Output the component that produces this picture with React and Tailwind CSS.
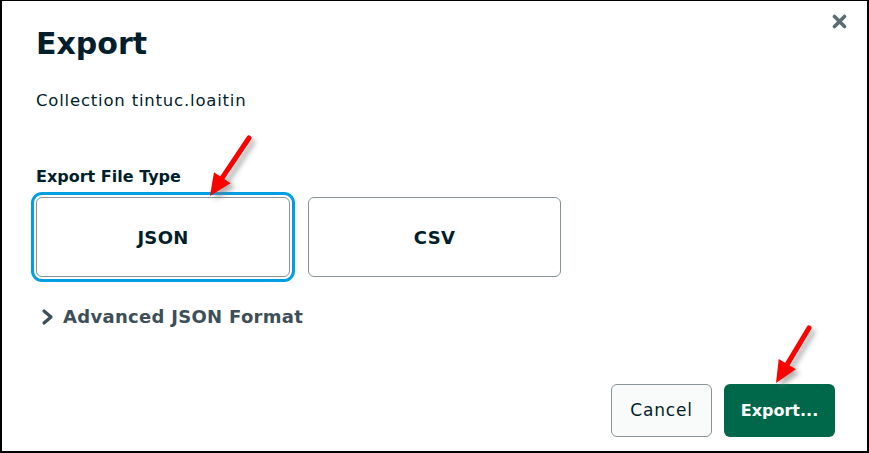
import React from 'react';

const Arrow = ({ x1, y1, x2, y2, className }) => {
  // red annotation arrow with soft shadow, drawn from tail (x1,y1) to tip (x2,y2)
  const dx = x2 - x1;
  const dy = y2 - y1;
  const len = Math.sqrt(dx * dx + dy * dy);
  const ux = dx / len;
  const uy = dy / len;
  const head = 22;
  const half = 10;
  const bx = x2 - ux * head;
  const by = y2 - uy * head;
  const p1 = `${bx - uy * half},${by + ux * half}`;
  const p2 = `${bx + uy * half},${by - ux * half}`;
  return (
    <g className={className}>
      <line x1={x1} y1={y1} x2={bx + ux * 2} y2={by + uy * 2} strokeWidth="5" strokeLinecap="round" />
      <polygon points={`${x2},${y2} ${p1} ${p2}`} strokeWidth="0" />
    </g>
  );
};

const Annotations = () => (
  <svg className="absolute left-0 top-0 pointer-events-none" width="869" height="453">
    <defs>
      <filter id="blur" x="-50%" y="-50%" width="200%" height="200%">
        <feGaussianBlur stdDeviation="2.5" />
      </filter>
    </defs>
    <g filter="url(#blur)" opacity="0.55">
      <Arrow x1={251} y1={141} x2={213} y2={199} className="stroke-[#777] fill-[#777]" />
      <Arrow x1={811} y1={331} x2={778} y2={386} className="stroke-[#777] fill-[#777]" />
    </g>
    <Arrow x1={247} y1={137} x2={208} y2={195} className="stroke-[#ff0000] fill-[#ff0000]" />
    <Arrow x1={807} y1={327} x2={774} y2={382} className="stroke-[#ff0000] fill-[#ff0000]" />
  </svg>
);

export default function App() {
  return (
    <div
      className="relative w-[869px] h-[453px] bg-white border-black border-t border-l-2 border-r-2 border-b-2 flex flex-col text-[#001e2b]"
      style={{ fontFamily: '"DejaVu Sans", sans-serif' }}
    >
      <button className="absolute top-[12px] right-[20px] w-[16px] h-[16px] flex items-center justify-center">
        <svg width="15" height="15" viewBox="0 0 15 15">
          <path d="M2.5 2.5 L12.5 12.5 M12.5 2.5 L2.5 12.5" stroke="#5c6c75" strokeWidth="3.6" strokeLinecap="round" />
        </svg>
      </button>

      <div className="pl-[34px] pt-[23px] flex flex-col">
        <h1 className="text-[30px] leading-[40px] font-bold">Export</h1>
        <p className="mt-[25px] text-[16.5px] leading-[24px] tracking-[0.8px]">Collection tintuc.loaitin</p>

        <label className="mt-[52px] text-[16px] leading-[24px] font-bold">Export File Type</label>
        <div className="mt-[8px] flex gap-[18px]">
          <button className="w-[254px] h-[80px] rounded-[6px] border border-[#889397] bg-white outline-[3px] outline-solid outline-[#019ee2] outline-offset-[2px] text-[18px] tracking-[0.3px] font-bold">
            JSON
          </button>
          <button className="w-[253px] h-[80px] rounded-[6px] border border-[#889397] bg-white text-[18px] tracking-[0.3px] font-bold">
            CSV
          </button>
        </div>

        <button className="mt-[28px] flex items-center gap-[9px] text-[18px] leading-[24px] font-bold tracking-[0.3px] text-[#3d4f58] self-start ml-[5px]">
          <svg width="13" height="18" viewBox="0 0 13 18">
            <path d="M3 3 L10 9 L3 15" fill="none" stroke="#3d4f58" strokeWidth="3.2" strokeLinecap="round" strokeLinejoin="round" />
          </svg>
          Advanced JSON Format
        </button>
      </div>

      <div className="mt-auto pb-[14px] pr-[32px] flex justify-end gap-[12px]">
        <button className="w-[101px] h-[53px] rounded-[6px] border border-[#889397] bg-[#f9fbfa] text-[17px] tracking-[0.8px]">
          Cancel
        </button>
        <button className="w-[111px] h-[53px] rounded-[6px] bg-[#00684a] text-white text-[16px] font-semibold">
          Export...
        </button>
      </div>

      <Annotations />
    </div>
  );
}
